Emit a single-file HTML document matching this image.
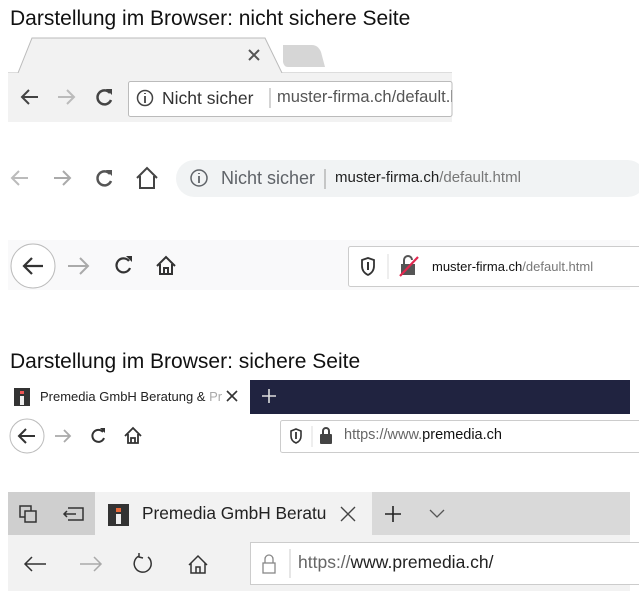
<!DOCTYPE html>
<html><head><meta charset="utf-8"><style>
body{margin:0;width:639px;height:600px;background:#fff;position:relative;overflow:hidden;font-family:"Liberation Sans",sans-serif}
.a{position:absolute}
.t{font-size:21px;color:#111;white-space:nowrap}
svg{position:absolute;overflow:visible}
.n{white-space:nowrap}
</style></head><body>
<div class="a t" style="left:10px;top:7px">Darstellung im Browser: nicht sichere Seite</div>

<!-- Chrome old -->
<svg style="left:0;top:0" width="639" height="130">
<path d="M8 73 L18 73 L32 38 L265 38 L282 73 L452 73" fill="#f2f2f2" stroke="#bbb"/>
<path d="M283 45 L312 45 Q318 45 321 52 L325 67 L288 67 Q284 67 283 62Z" fill="#d6d6d6"/>
<path d="M249 50 L259 60 M259 50 L249 60" stroke="#555" stroke-width="2"/>
<rect x="8" y="73" width="444" height="49" fill="#f2f2f2"/>
<path d="M22 97 H38 M29 90 L22 97 L29 104" stroke="#444" stroke-width="2" fill="none"/>
<path d="M58 97 H74 M67 90 L74 97 L67 104" stroke="#bbb" stroke-width="2" fill="none"/>
<path d="M110 93 A7 7 0 1 0 111 100" stroke="#444" stroke-width="2.5" fill="none"/><path d="M106 89 L112 89 L112 95Z" fill="#444"/>
<rect x="128.5" y="81.5" width="323.5" height="35" rx="2" fill="#fff" stroke="#bbb"/>
<circle cx="145" cy="98" r="7.5" fill="none" stroke="#444" stroke-width="1.5"/><path d="M145 96V103M145 93V94" stroke="#444" stroke-width="1.8"/>
<path d="M270 88V108" stroke="#aaa"/>
</svg>
<div class="a" style="left:128px;top:80px;width:324px;height:40px;overflow:hidden">
<div class="a n" style="left:34px;top:8px;font-size:17.5px;color:#333">Nicht sicher</div>
<div class="a n" style="left:149px;top:8px;font-size:16.5px;color:#555">muster-firma.ch/default.html</div>
</div>

<!-- Chrome new -->
<svg style="left:0;top:0" width="639" height="210">
<path d="M12 178 H28 M19 171 L12 178 L19 185" stroke="#bbb" stroke-width="2" fill="none"/>
<path d="M54 178 H70 M63 171 L70 178 L63 185" stroke="#aaa" stroke-width="2" fill="none"/>
<path d="M110 174 A7 7 0 1 0 111 181" stroke="#555" stroke-width="2.5" fill="none"/><path d="M106 170 L112 170 L112 176Z" fill="#555"/>
<path d="M137 178 L147 168 L157 178 M140 176 V188 H154 V176" stroke="#444" stroke-width="2" fill="none"/>
<rect x="176" y="160" width="470" height="37" rx="18.5" fill="#f1f3f4"/>
<circle cx="199" cy="178" r="8" fill="none" stroke="#5f6368" stroke-width="1.5"/><path d="M199 176V183M199 173V174" stroke="#5f6368" stroke-width="1.8"/>
<path d="M325 169V189" stroke="#999"/>
</svg>
<div class="a n" style="left:221px;top:168px;font-size:18px;color:#5f6368">Nicht sicher</div>
<div class="a n" style="left:335px;top:169px;font-size:15px;color:#222">muster-firma.ch<span style="color:#777">/default.html</span></div>

<!-- Firefox 1 -->
<svg style="left:0;top:0" width="639" height="300">
<rect x="8" y="240" width="622" height="50" fill="#f9f9fa"/>
<circle cx="33" cy="266" r="22" fill="#fff" stroke="#bbb"/>
<path d="M24 266 H43 M32 258 L24 266 L32 274" stroke="#333" stroke-width="2.2" fill="none"/>
<path d="M68 266 H88 M80 258 L88 266 L80 274" stroke="#aaa" stroke-width="2" fill="none"/>
<path d="M129 261 A7 7 0 1 0 130 268" stroke="#333" stroke-width="2.2" fill="none"/><path d="M126 256 L132 256 L132 262Z" fill="#333"/>
<path d="M157 266 L166 257 L175 266 M160 264 V274 H172 V264 M164 274 V268 H168 V274" stroke="#333" stroke-width="2" fill="none"/>
<rect x="348.5" y="246.5" width="300" height="40" rx="2" fill="#fff" stroke="#ccc"/>
<path d="M362 260 L368 258 L374 260 V266 Q374 272 368 275 Q362 272 362 266Z" fill="none" stroke="#333" stroke-width="1.8"/><path d="M368 262V270" stroke="#333" stroke-width="2"/>
<path d="M388 254V279" stroke="#ddd"/>
<rect x="401" y="264" width="14" height="11" fill="#555"/><path d="M404 264V260 A4 4 0 0 1 412 260" stroke="#555" stroke-width="2" fill="none"/>
<path d="M400 276 L418 257" stroke="#e22850" stroke-width="2.2"/>
</svg>
<div class="a n" style="left:432px;top:259px;font-size:13px;color:#111">muster-firma.ch<span style="color:#777">/default.html</span></div>

<div class="a t" style="left:10px;top:350px">Darstellung im Browser: sichere Seite</div>

<!-- Firefox 2 -->
<svg style="left:0;top:0" width="639" height="460">
<rect x="250" y="380" width="380" height="34" fill="#202340"/>
<path d="M262 396 H276 M269 389 V403" stroke="#ddd" stroke-width="1.6"/>
<rect x="14" y="388" width="16" height="18" fill="#333"/><rect x="20" y="391" width="4" height="3" fill="#e55"/><rect x="20" y="396" width="4" height="9" fill="#eee"/>
<path d="M227 391 L237 401 M237 391 L227 401" stroke="#333" stroke-width="1.6"/>
<circle cx="27" cy="436" r="17" fill="#fff" stroke="#bbb"/>
<path d="M19 436 H35 M26 429 L19 436 L26 443" stroke="#333" stroke-width="2" fill="none"/>
<path d="M55 436 H70 M64 430 L70 436 L64 442" stroke="#aaa" stroke-width="1.8" fill="none"/>
<path d="M103 432 A6 6 0 1 0 104 438" stroke="#333" stroke-width="2" fill="none"/><path d="M100 428 L105 428 L105 433Z" fill="#333"/>
<path d="M125 436 L133 428 L141 436 M128 434 V443 H138 V434 M131 443 V438 H135 V443" stroke="#333" stroke-width="1.8" fill="none"/>
<rect x="280.5" y="420.5" width="360" height="32" rx="2" fill="#fff" stroke="#ccc"/>
<path d="M291 431 L296 429 L301 431 V436 Q301 441 296 443 Q291 441 291 436Z" fill="none" stroke="#333" stroke-width="1.6"/><path d="M296 432V439" stroke="#333" stroke-width="1.8"/>
<path d="M312 426V447" stroke="#ddd"/>
<rect x="320" y="434" width="12" height="10" rx="1" fill="#444"/><path d="M323 434V431 A3 3 0 0 1 329 431V434" stroke="#444" stroke-width="2" fill="none"/>
</svg>
<div class="a n" style="left:40px;top:389px;font-size:13px;color:#222">Premedia GmbH Beratung &amp; <span style="color:#aaa">Pr</span></div>
<div class="a n" style="left:344px;top:427px;font-size:14.5px;color:#666">https://www.<span style="color:#111">premedia.ch</span></div>

<!-- Edge -->
<svg style="left:0;top:0" width="639" height="600">
<rect x="8" y="492" width="622" height="43" fill="#d9d9d9"/>
<rect x="8" y="492" width="87" height="43" fill="#cfcfcf"/>
<rect x="95" y="492" width="277" height="43" fill="#f2f2f2"/>
<rect x="8" y="535" width="622" height="56" fill="#f2f2f2"/>
<rect x="20" y="506" width="11" height="11" fill="none" stroke="#333" stroke-width="1.5"/><rect x="25" y="511" width="11" height="11" fill="#cfcfcf" stroke="#333" stroke-width="1.5"/>
<path d="M68 508 H83 V520 H68 M64 514 H76 M67 511 L64 514 L67 517" stroke="#333" stroke-width="1.5" fill="none"/>
<rect x="108" y="504" width="21" height="22" fill="#333"/><rect x="116" y="508" width="5" height="4" fill="#e86a3a"/><rect x="116" y="514" width="5" height="10" fill="#eee"/>
<path d="M341 507 L355 521 M355 507 L341 521" stroke="#444" stroke-width="1.4"/>
<path d="M385 514 H401 M393 506 V522" stroke="#222" stroke-width="1.6"/>
<path d="M430 510 L437 517 L444 510" stroke="#555" stroke-width="1.3" fill="none"/>
<path d="M25 564 H46 M32 557 L25 564 L32 571" stroke="#333" stroke-width="1.5" fill="none"/>
<path d="M80 564 H101 M94 557 L101 564 L94 571" stroke="#aaa" stroke-width="1.5" fill="none"/>
<path d="M139 556 A8.5 8.5 0 1 0 148 557 M139 553 L139 557 L143 558" stroke="#333" stroke-width="1.5" fill="none"/>
<path d="M189 565 L198 556 L207 565 M191 563 V573 H205 V563 M196 573 V567 H200 V573" stroke="#333" stroke-width="1.5" fill="none"/>
<rect x="250.5" y="542.5" width="400" height="42" fill="#fff" stroke="#ccc"/>
<rect x="263" y="563" width="12" height="10" fill="none" stroke="#888" stroke-width="1.3"/><path d="M265 563V559 A4 4 0 0 1 273 559V563" stroke="#888" stroke-width="1.3" fill="none"/>
<path d="M290 549V578" stroke="#ccc"/>
</svg>
<div class="a n" style="left:142px;top:503px;font-size:17.3px;color:#222">Premedia GmbH Beratu</div>
<div class="a n" style="left:298px;top:552px;font-size:17.5px;color:#666">https://<span style="color:#222">www.premedia.ch/</span></div>
</body></html>
